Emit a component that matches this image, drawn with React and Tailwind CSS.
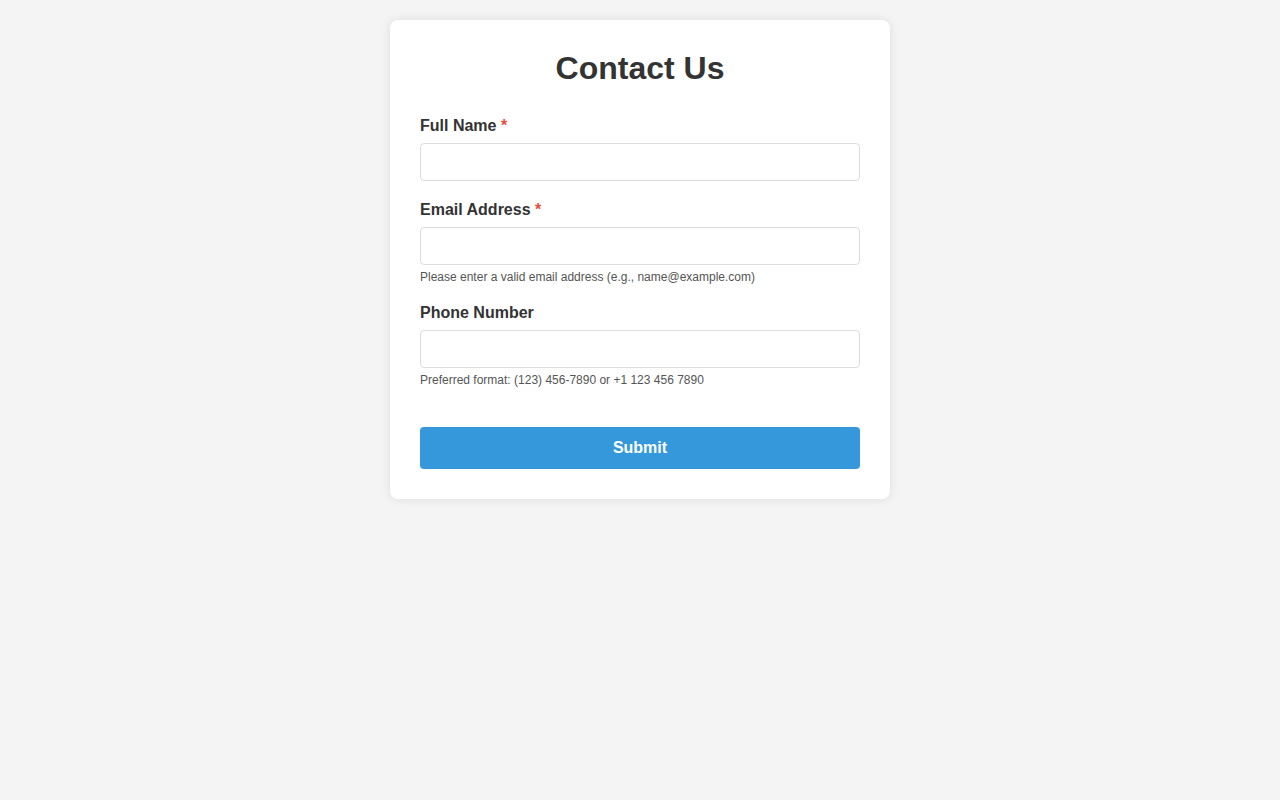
export default function App() {
  const font = { fontFamily: '"Liberation Sans", Arial, Helvetica, sans-serif' };
  return (
    <div className="min-h-[800px] bg-[#f4f4f4] pt-5" style={font}>
      <div className="mx-auto w-[500px] rounded-lg bg-white p-[30px] shadow-[0_0_10px_rgba(0,0,0,0.1)]">
        <h1 className="mb-[30px] text-center text-[32px] font-bold leading-[37px] text-[#333]">Contact Us</h1>
        <form onSubmit={(e) => e.preventDefault()}>
          <div className="mb-5">
            <label className="mb-2 block text-[16px] font-bold leading-[18px] text-[#333]">
              Full Name <span className="text-[#e74c3c]">*</span>
            </label>
            <input type="text" className="box-border block h-[38px] w-full rounded border border-[#ddd] px-[10px] text-[16px] outline-none" />
          </div>
          <div className="mb-5">
            <label className="mb-2 block text-[16px] font-bold leading-[18px] text-[#333]">
              Email Address <span className="text-[#e74c3c]">*</span>
            </label>
            <input type="email" className="box-border block h-[38px] w-full rounded border border-[#ddd] px-[10px] text-[16px] outline-none" />
            <div className="mt-[5px] text-[12px] leading-[14px] text-[#555]">Please enter a valid email address (e.g., name@example.com)</div>
          </div>
          <div className="mb-10">
            <label className="mb-2 block text-[16px] font-bold leading-[18px] text-[#333]">Phone Number</label>
            <input type="tel" className="box-border block h-[38px] w-full rounded border border-[#ddd] px-[10px] text-[16px] outline-none" />
            <div className="mt-[5px] text-[12px] leading-[14px] text-[#555]">Preferred format: (123) 456-7890 or +1 123 456 7890</div>
          </div>
          <button type="submit" className="block h-[42px] w-full rounded bg-[#3498db] text-[16px] font-bold text-white">
            Submit
          </button>
        </form>
      </div>
    </div>
  );
}
